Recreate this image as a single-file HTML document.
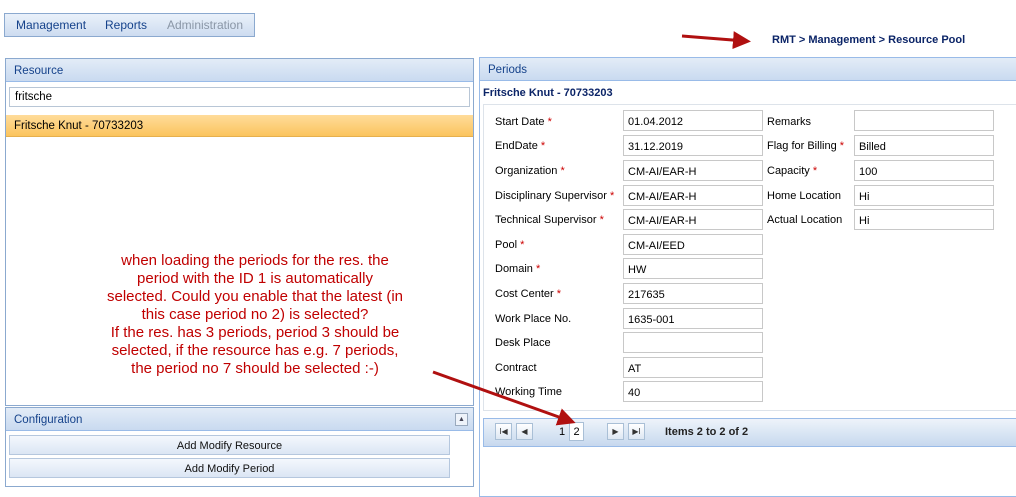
<!DOCTYPE html>
<html><head><meta charset="utf-8"><style>
*{box-sizing:border-box;margin:0;padding:0}
body{width:1016px;height:483px;background:#fff;position:relative;overflow:hidden;font-family:"Liberation Sans",sans-serif;font-size:11px;color:#000}
.a{position:absolute}
.hdr{background:linear-gradient(#e3ecf7,#c9daf0);color:#15428b;font-size:11.5px;padding-left:8px;border-bottom:1px solid #99bbe8}
.inp{position:absolute;border:1px solid #c8c8c8;background:#fff;height:21px;padding:5px 0 0 4px;font-size:11px}
.lbl{position:absolute;font-size:11px}
.st{color:#c00}
.btn{position:absolute;left:9px;width:441px;height:20px;border:1px solid #b5c7de;background:linear-gradient(#f4f8fd,#dbe6f4);text-align:center;font-size:11px;padding-top:4px;color:#111}
.pb{position:absolute;top:423px;width:17px;height:17px;border:1px solid #a9bfd6;background:linear-gradient(#fff,#dde7f3);font-size:8px;text-align:center;line-height:15px;color:#333}
.note{color:#c00000;font-size:15px;text-align:center;line-height:18px;white-space:nowrap}
</style></head><body>
<div class="a" style="left:4px;top:13px;width:251px;height:24px;border:1px solid #8ba9cf;background:linear-gradient(#eaf1fa,#cddcf0)"></div>
<div class="a" style="left:16px;top:18px;font-size:12px;color:#15428b">Management</div>
<div class="a" style="left:105px;top:18px;font-size:12px;color:#15428b">Reports</div>
<div class="a" style="left:167px;top:18px;font-size:12px;color:#8a96a6">Administration</div>
<div class="a" style="left:772px;top:34px;font-size:11px;font-weight:bold;color:#0b2467">RMT &gt; Management &gt; Resource Pool</div>

<div class="a" style="left:5px;top:58px;width:469px;height:348px;border:1px solid #8ba9cf;background:#fff"></div>
<div class="a hdr" style="left:6px;top:59px;width:467px;height:23px;padding-top:6px">Resource</div>
<div class="a" style="left:9px;top:87px;width:461px;height:20px;border:1px solid #b8c6d6;padding:3px 0 0 5px;font-size:11.5px">fritsche</div>
<div class="a" style="left:6px;top:115px;width:467px;height:22px;background:linear-gradient(#ffdc9a,#fbc45e);border-bottom:1px solid #e6b04d;padding:5px 0 0 8px;font-size:11.5px">Fritsche Knut - 70733203</div>
<div class="a note" style="left:55px;top:252px;width:400px">when loading the periods for the res. the<br>period with the ID 1 is automatically<br>selected. Could you enable that the latest (in<br>this case period no 2) is selected?<br>If the res. has 3 periods, period 3 should be<br>selected, if the resource has e.g. 7 periods,<br>the period no 7 should be selected :-)</div>

<div class="a" style="left:5px;top:407px;width:469px;height:80px;border:1px solid #8ba9cf;background:#fff"></div>
<div class="a hdr" style="left:6px;top:408px;width:467px;height:23px;padding-top:6px">Configuration</div>
<div class="a" style="left:455px;top:413px;width:13px;height:13px;border:1px solid #99a9bd;background:#eef3fa;font-size:7px;text-align:center;line-height:11px;color:#445">▲</div>
<div class="btn" style="top:435px">Add Modify Resource</div>
<div class="btn" style="top:458px">Add Modify Period</div>

<div class="a" style="left:479px;top:57px;width:540px;height:440px;border:1px solid #99bbe8;background:#fff"></div>
<div class="a hdr" style="left:480px;top:58px;width:540px;height:23px;padding-top:6px">Periods</div>
<div class="a" style="left:483px;top:87px;font-size:11px;font-weight:bold;color:#0b2467">Fritsche Knut - 70733203</div>
<div class="a" style="left:483px;top:104px;width:540px;height:307px;border:1px solid #dde3ea"></div>

<div class="lbl" style="left:495px;top:116px">Start Date <span class="st">*</span></div><div class="inp" style="left:623px;top:110px;width:140px">01.04.2012</div>
<div class="lbl" style="left:495px;top:140px">EndDate <span class="st">*</span></div><div class="inp" style="left:623px;top:135px;width:140px">31.12.2019</div>
<div class="lbl" style="left:495px;top:165px">Organization <span class="st">*</span></div><div class="inp" style="left:623px;top:160px;width:140px">CM-AI/EAR-H</div>
<div class="lbl" style="left:495px;top:190px">Disciplinary Supervisor <span class="st">*</span></div><div class="inp" style="left:623px;top:185px;width:140px">CM-AI/EAR-H</div>
<div class="lbl" style="left:495px;top:214px">Technical Supervisor <span class="st">*</span></div><div class="inp" style="left:623px;top:209px;width:140px">CM-AI/EAR-H</div>
<div class="lbl" style="left:495px;top:239px">Pool <span class="st">*</span></div><div class="inp" style="left:623px;top:234px;width:140px">CM-AI/EED</div>
<div class="lbl" style="left:495px;top:263px">Domain <span class="st">*</span></div><div class="inp" style="left:623px;top:258px;width:140px">HW</div>
<div class="lbl" style="left:495px;top:288px">Cost Center <span class="st">*</span></div><div class="inp" style="left:623px;top:283px;width:140px">217635</div>
<div class="lbl" style="left:495px;top:313px">Work Place No.</div><div class="inp" style="left:623px;top:308px;width:140px">1635-001</div>
<div class="lbl" style="left:495px;top:337px">Desk Place</div><div class="inp" style="left:623px;top:332px;width:140px"></div>
<div class="lbl" style="left:495px;top:362px">Contract</div><div class="inp" style="left:623px;top:357px;width:140px">AT</div>
<div class="lbl" style="left:495px;top:386px">Working Time</div><div class="inp" style="left:623px;top:381px;width:140px">40</div>

<div class="lbl" style="left:767px;top:116px">Remarks</div><div class="inp" style="left:854px;top:110px;width:140px"></div>
<div class="lbl" style="left:767px;top:140px">Flag for Billing <span class="st">*</span></div><div class="inp" style="left:854px;top:135px;width:140px">Billed</div>
<div class="lbl" style="left:767px;top:165px">Capacity <span class="st">*</span></div><div class="inp" style="left:854px;top:160px;width:140px">100</div>
<div class="lbl" style="left:767px;top:190px">Home Location</div><div class="inp" style="left:854px;top:185px;width:140px">Hi</div>
<div class="lbl" style="left:767px;top:214px">Actual Location</div><div class="inp" style="left:854px;top:209px;width:140px">Hi</div>

<div class="a" style="left:483px;top:418px;width:540px;height:29px;border:1px solid #99bbe8;background:linear-gradient(#eef3fa 0%,#dae6f4 50%,#c7d8ee 100%)"></div>
<div class="pb" style="left:495px">I◀</div>
<div class="pb" style="left:516px">◀</div>
<div class="a" style="left:559px;top:426px;font-size:11px">1</div>
<div class="a" style="left:569px;top:422px;width:15px;height:19px;border:1px solid #a9bfd6;background:#fff;font-size:11px;text-align:center;padding-top:3px">2</div>
<div class="pb" style="left:607px">▶</div>
<div class="pb" style="left:628px">▶I</div>
<div class="a" style="left:665px;top:426px;font-size:11px;font-weight:bold;color:#222">Items 2 to 2 of 2</div>

<svg class="a" style="left:0;top:0" width="1016" height="483">
<defs><marker id="m" markerWidth="6" markerHeight="6" refX="4" refY="3" orient="auto"><path d="M0,0 L6,3 L0,6 z" fill="#b01010"/></marker></defs>
<line x1="682" y1="36" x2="745" y2="41" stroke="#b01010" stroke-width="3" marker-end="url(#m)"/>
<line x1="433" y1="372" x2="570" y2="421" stroke="#b01010" stroke-width="3" marker-end="url(#m)"/>
</svg>
</body></html>
